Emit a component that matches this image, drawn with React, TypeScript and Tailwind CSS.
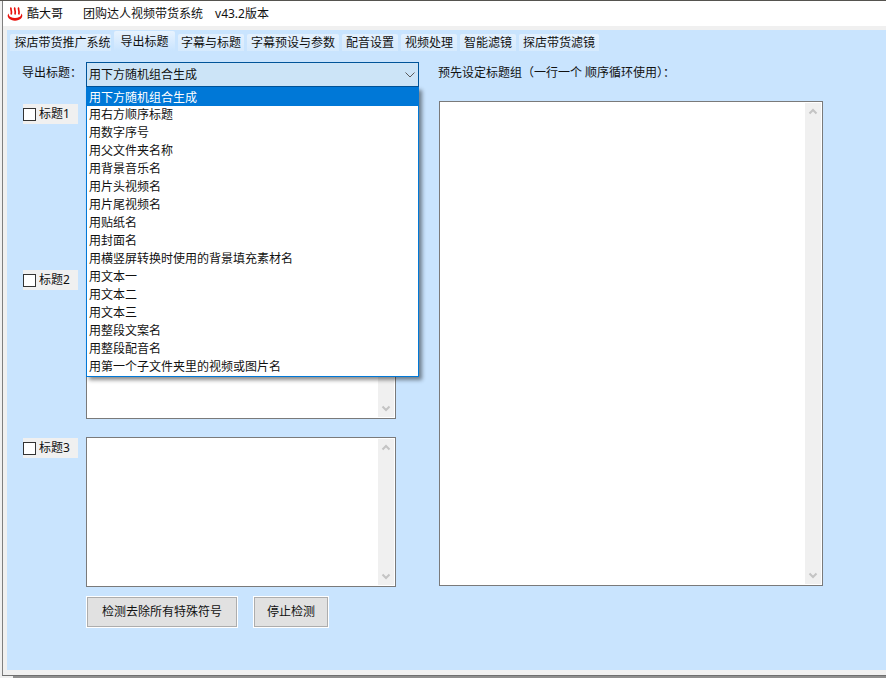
const FONT = "font-['Noto_Sans','Noto_Sans_CJK_SC',sans-serif]";

const TABS = [
  { label: "探店带货推广系统", w: "w-[101px] pl-1" },
  { label: "导出标题", w: "w-[61px]", active: true },
  { label: "字幕与标题", w: "w-[66px]" },
  { label: "字幕预设与参数", w: "w-[92px]" },
  { label: "配音设置", w: "w-[56px]" },
  { label: "视频处理", w: "w-[56px]" },
  { label: "智能滤镜", w: "w-[56px]" },
  { label: "探店带货滤镜", w: "w-[80px]" },
];

const OPTIONS = [
  "用下方随机组合生成",
  "用右方顺序标题",
  "用数字序号",
  "用父文件夹名称",
  "用背景音乐名",
  "用片头视频名",
  "用片尾视频名",
  "用贴纸名",
  "用封面名",
  "用横竖屏转换时使用的背景填充素材名",
  "用文本一",
  "用文本二",
  "用文本三",
  "用整段文案名",
  "用整段配音名",
  "用第一个子文件夹里的视频或图片名",
];

function Scrollbar() {
  return (
    <div className="flex h-full w-4 flex-col justify-between bg-[#f0f0f0] py-[5px]">
      <svg width="16" height="7" viewBox="0 0 16 7" fill="none">
        <path d="M4.500 5.500 L8 2 L11.500 5.500" stroke="#c4c4c4" strokeWidth="2" />
      </svg>
      <svg width="16" height="7" viewBox="0 0 16 7" fill="none">
        <path d="M4.500 1.500 L8 5 L11.500 1.500" stroke="#c4c4c4" strokeWidth="2" />
      </svg>
    </div>
  );
}

function TextBox({ className }: { className: string }) {
  return (
    <div className={`flex justify-end border border-[#7a7a7a] bg-white p-px ${className}`}>
      <Scrollbar />
    </div>
  );
}

function TitleRow({ label, mt, labelTop }: { label: string; mt: string; labelTop: string }) {
  return (
    <div className={`flex items-start ${mt}`}>
      <div className={`ml-4 flex h-5 w-[55px] items-center bg-[#f0f0f0] ${labelTop}`}>
        <span className="h-[13px] w-[13px] border border-[#333333] bg-white" />
        <span className="ml-[3px] text-[12px] leading-none">{label}</span>
      </div>
      <TextBox className="ml-2 h-[150px] w-[310px]" />
    </div>
  );
}

function Btn({ className, children }: { className: string; children: string }) {
  return (
    <div className={`box-content border border-white ${className}`}>
      <div className="flex h-[30px] items-center justify-center border border-[#adadad] bg-[#e1e1e1]">
        {children}
      </div>
    </div>
  );
}

export default function App() {
  return (
    <div className={`${FONT} h-[678px] w-[886px] overflow-hidden bg-[#f0f0f0] text-[12px] text-[#111111]`}>
      <div className="h-px bg-[#55534f]" />
      <div className="ml-[2px] h-[674px] border-l border-l-[#7f7f7f] bg-[#f0f0f0]">
        <div className="flex h-[25px] items-center bg-white pl-1">
          <svg width="16" height="16" viewBox="0 0 16 16" fill="none">
            <path
              d="M4.200 1.500c-1.400 1.800 1.300 3.200 0 7M8 1.500c-1.400 1.800 1.300 3.200 0 7M11.800 1.500c-1.400 1.800 1.300 3.200 0 7"
              stroke="#e8120c"
              strokeWidth="1.700"
            />
            <path
              d="M1.800 7.500C.2 8.700.4 10.800 1.700 12.200 3.200 13.800 5.600 14.700 8 14.700s4.800-.9 6.300-2.500c1.300-1.400 1.500-3.500-.1-4.700.3 1.600-.5 2.800-1.900 3.500-1.300.6-2.800.9-4.300.9s-3-.3-4.300-.9C2.300 10.300 1.500 9.100 1.800 7.500Z"
              fill="#e8120c"
            />
          </svg>
          <span className="ml-1">酷大哥</span>
          <span className="ml-5">团购达人视频带货系统</span>
          <span className="ml-3">v43.2版本</span>
        </div>

        <div className="pl-1 pt-1">
          <div className="h-[640px] bg-[#c9e4fe]">
            <div className="flex h-[21px] items-end gap-[3px] pl-[3px]">
              {TABS.map((tab) => (
                <div
                  key={tab.label}
                  className={`flex items-center justify-center rounded-t-[2px] bg-linear-to-b ${tab.w} ${
                    tab.active
                      ? "h-5 from-[#e8f3fe] to-[#c9e4fe] pt-px"
                      : "h-[17px] from-[#e3f0fd] to-[#d6eafd]"
                  }`}
                >
                  {tab.label}
                </div>
              ))}
            </div>

            <div className="relative flex items-start">
              <div className="w-[414px]">
                <div className="mt-[11px] flex h-[25px] items-start pt-[5px]">
                  <span className="ml-[15px] leading-none">{"导出标题\uFF1A"}</span>
                </div>
                <TitleRow label="标题1" mt="mt-[14px]" labelTop="mt-[3px]" />
                <TitleRow label="标题2" mt="mt-[18px]" labelTop="mt-px" />
                <TitleRow label="标题3" mt="mt-[18px]" labelTop="mt-px" />
                <div className="ml-[79px] mt-[9px] flex gap-[15px]">
                  <Btn className="w-[150px]">检测去除所有特殊符号</Btn>
                  <Btn className="w-[74px]">停止检测</Btn>
                </div>
              </div>
              <div className="ml-[18px] pt-[5px]">
                <div className="-ml-px h-11 pt-[11px] leading-none">
                  {"预先设定标题组\uFF08一行一个 顺序循环使用\uFF09\uFF1A"}
                </div>
                <TextBox className="mt-px h-[485px] w-[384px]" />
              </div>

              <div className="absolute left-[79px] top-[11px] w-[333px]">
                <div className="flex h-[25px] items-center justify-between border border-[#005499] bg-[#cce4f7] pl-[2px] pr-[3px]">
                  <span>用下方随机组合生成</span>
                  <svg width="10" height="6" viewBox="0 0 10 6" fill="none">
                    <path d="M.5 .5 L5 5 L9.500 .5" stroke="#5a5a5a" strokeWidth="1" />
                  </svg>
                </div>
                <div className="border border-[#0078d7] bg-white shadow-[3px_3px_4px_rgba(0,0,0,0.45)]">
                  {OPTIONS.map((option, index) => (
                    <div
                      key={option}
                      className={`h-[18px] pl-[2px] ${
                        index === 0 ? "bg-[#0078d7] leading-[19px] text-white" : "leading-[18px]"
                      }`}
                    >
                      {option}
                    </div>
                  ))}
                </div>
              </div>
            </div>
          </div>
        </div>
      </div>
      <div className="ml-[2px] h-px bg-[#6f6f6f]" />
      <div className="ml-[13px] h-[2px] bg-[#8f8f8f]" />
    </div>
  );
}
